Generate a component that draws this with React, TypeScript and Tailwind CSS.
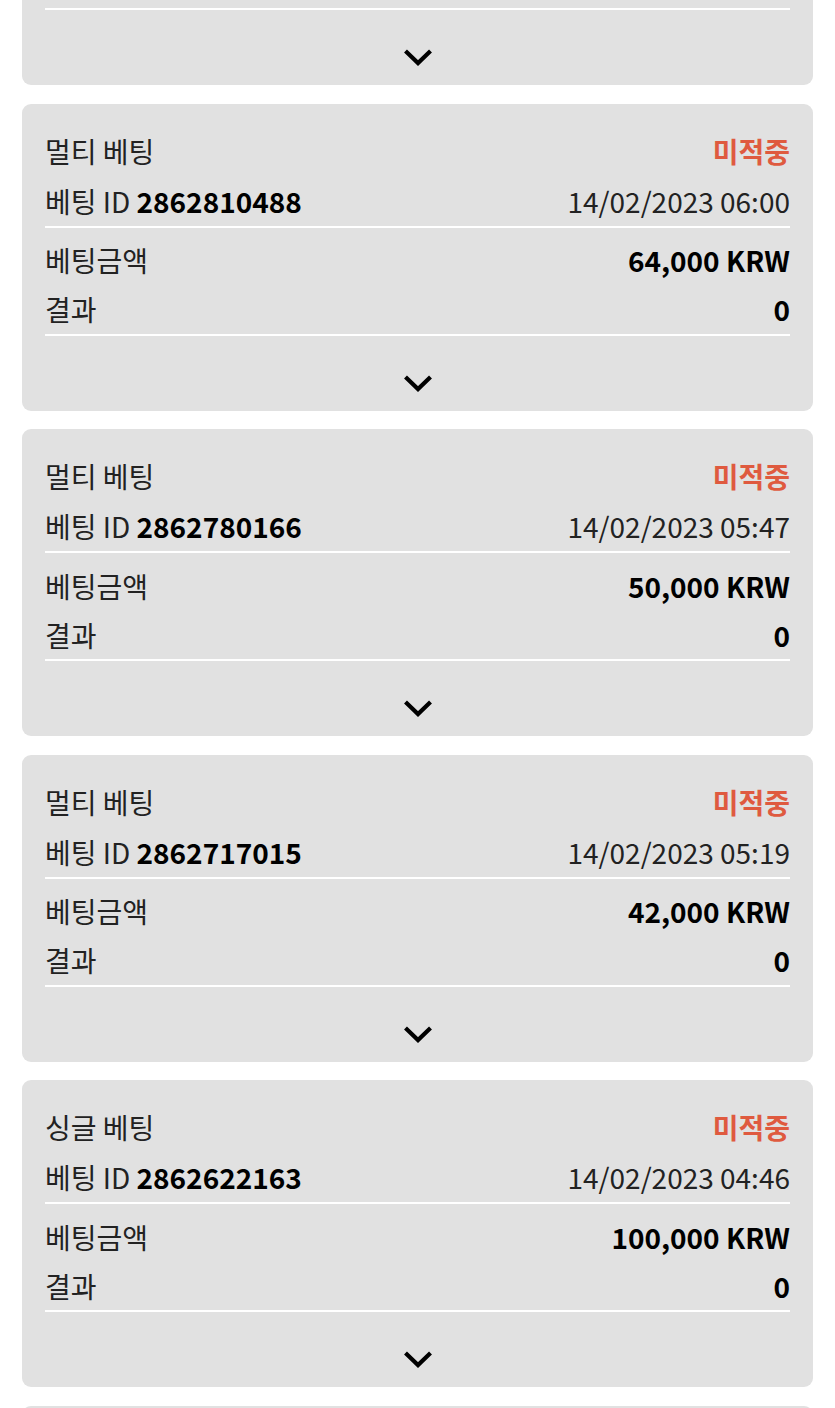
type Bet = {
  type: string;
  id: string;
  date: string;
  amount: string;
  result: string;
};

const bets: Bet[] = [
  { type: '멀티 베팅', id: '2862830011', date: '14/02/2023 06:12', amount: '30,000 KRW', result: '0' },
  { type: '멀티 베팅', id: '2862810488', date: '14/02/2023 06:00', amount: '64,000 KRW', result: '0' },
  { type: '멀티 베팅', id: '2862780166', date: '14/02/2023 05:47', amount: '50,000 KRW', result: '0' },
  { type: '멀티 베팅', id: '2862717015', date: '14/02/2023 05:19', amount: '42,000 KRW', result: '0' },
  { type: '싱글 베팅', id: '2862622163', date: '14/02/2023 04:46', amount: '100,000 KRW', result: '0' },
  { type: '멀티 베팅', id: '2862600120', date: '14/02/2023 04:30', amount: '20,000 KRW', result: '0' },
];

function Chevron() {
  return (
    <svg width="32" height="18" viewBox="0 0 32 18" fill="none">
      <path d="M3.5 3 L16 15 L28.5 3" stroke="#000" strokeWidth="4.2" strokeLinecap="butt" />
    </svg>
  );
}

function BetCard({ bet }: { bet: Bet }) {
  return (
    <div className="bg-[#e1e1e1] rounded-[9px] px-[23px] pt-[22px] h-[307px] shrink-0">
      <div className="flex justify-between items-center h-[50px]">
        <span className="text-[#222]">{bet.type}</span>
        <span className="font-bold text-[#df5a3f]">미적중</span>
      </div>
      <div className="flex justify-between items-center h-[50px]">
        <span className="text-[#222]">
          베팅 ID <span className="font-bold text-black">{bet.id}</span>
        </span>
        <span className="text-[#222]">{bet.date}</span>
      </div>
      <div className="h-[2px] bg-white" />
      <div className="flex justify-between items-center h-[49px] mt-[8px]">
        <span className="text-[#222]">베팅금액</span>
        <span className="font-bold text-black">{bet.amount}</span>
      </div>
      <div className="flex justify-between items-center h-[49px]">
        <span className="text-[#222]">결과</span>
        <span className="font-bold text-black">{bet.result}</span>
      </div>
      <div className="h-[2px] bg-white" />
      <div className="flex justify-center pt-[38px]">
        <Chevron />
      </div>
    </div>
  );
}

export default function App() {
  return (
    <div
      className="min-h-screen bg-white overflow-hidden h-[1408px]"
      style={{ fontFamily: '"Noto Sans CJK KR", "Noto Sans", sans-serif' }}
    >
      <div className="px-[22px] -mt-[222px] flex flex-col gap-[18.6px] text-[28px] leading-none">
        {bets.map((bet) => (
          <BetCard key={bet.id} bet={bet} />
        ))}
      </div>
    </div>
  );
}
